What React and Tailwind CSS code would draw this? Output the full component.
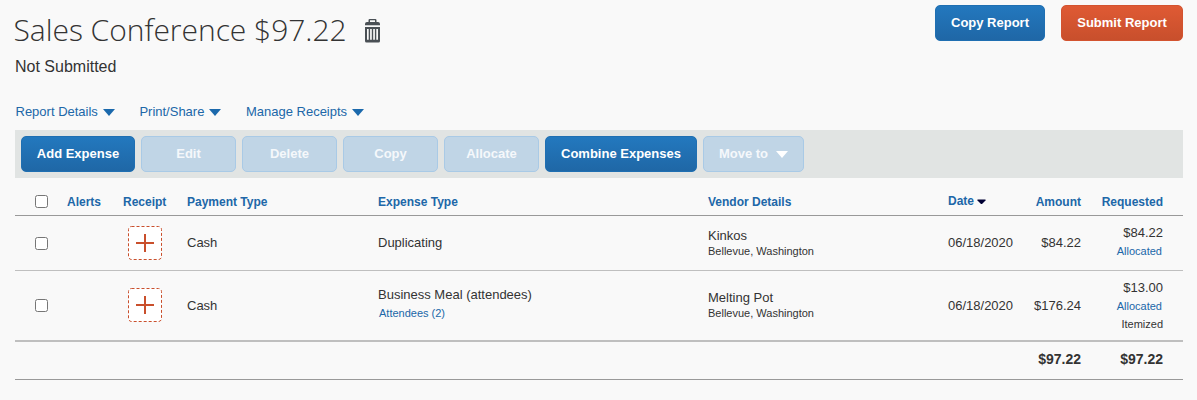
import React from 'react';

const COLS =
  'grid grid-cols-[52px_56px_64px_191px_330px_240px_90px_43px_82px_20px]';

function Caret({ className }) {
  return (
    <svg viewBox="0 0 12 7" className={`h-[7px] w-3 ${className}`} aria-hidden="true">
      <path d="M0 0h12L6 7z" fill="currentColor" />
    </svg>
  );
}

function TrashIcon() {
  return (
    <svg viewBox="0 0 15 24" className="h-6 w-[15px] text-[#4a5055]" aria-hidden="true">
      <path
        fill="currentColor"
        fillRule="evenodd"
        d="M3.500 3V1.200Q3.500 0 4.700 0h5.600q1.200 0 1.200 1.200V3H13q2 0 2 2V6.200H0V5q0-2 2-2zM5 3h5V1.300H5zM0 8h15v14q0 1.500-1.500 1.500h-12Q0 23.500 0 22zM2 10v10.800h1.700V10zM5.100 10v10.800h1.700V10zM8.200 10v10.800h1.700V10zM11.300 10v10.800h1.700V10z"
      />
    </svg>
  );
}

function Button({ children, tone = 'blue', className = '' }) {
  const tones = {
    blue: 'border-[#1f6fb2] bg-linear-to-b from-[#2378be] to-[#1f67a6] text-white',
    red: 'border-[#d3532f] bg-linear-to-b from-[#df5a34] to-[#c84f2c] text-white',
    disabled: 'border-[#a9cae6] bg-[#c0d5e6] text-[#f5f8fb]',
  };
  return (
    <button
      type="button"
      className={`flex h-9 shrink-0 items-center justify-center rounded-[5px] border pb-px text-[13px] font-bold ${tones[tone]} ${className}`}
    >
      {children}
    </button>
  );
}

function MenuLink({ children }) {
  return (
    <a className="flex items-center text-[13px] leading-4 text-[#2067a8]">
      {children}
      <Caret className="mt-px ml-[5px] text-[#1b69ac]" />
    </a>
  );
}

function Checkbox() {
  return (
    <input
      type="checkbox"
      className="ml-5 block size-[13px] appearance-none rounded-[2.5px] border border-[#767676] bg-white"
    />
  );
}

function AddReceipt() {
  return (
    <svg viewBox="0 0 34 34" className="ml-[5px] block size-[34px]" aria-hidden="true">
      <rect x="0.500" y="0.500" width="33" height="33" rx="3" fill="#fff" stroke="#c94f2c" strokeDasharray="3 2" />
      <path d="M8 17h18M17 8v18" stroke="#c94f2c" strokeWidth="2" />
    </svg>
  );
}

function Row({ type, attendees, vendor, amount, requested, itemized, className }) {
  const nudge = itemized ? 'pt-px' : '';
  return (
    <div className={`${COLS} items-center border-[#bfbfbf] ${className}`}>
      <Checkbox />
      <span />
      <AddReceipt />
      <span className={nudge}>Cash</span>
      <div className="leading-[18px]">
        <div>{type}</div>
        {attendees && <div className="pb-[3px] pl-px text-[11px] text-[#2067a8]">{attendees}</div>}
      </div>
      <div>
        <div className="leading-4">{vendor}</div>
        <div className="text-[11px] leading-[15px]">Bellevue, Washington</div>
      </div>
      <span className={`whitespace-nowrap ${nudge}`}>06/18/2020</span>
      <span className={`flex justify-end whitespace-nowrap ${nudge}`}>{amount}</span>
      <div className={`text-right leading-[18px] ${itemized ? '' : 'pb-[3px]'}`}>
        <div className="pt-px">{requested}</div>
        <div className="pr-px text-[11px] text-[#2067a8]">Allocated</div>
        {itemized && <div className="text-[11px]">Itemized</div>}
      </div>
    </div>
  );
}

export default function App() {
  return (
    <main className="h-[400px] w-[1197px] overflow-hidden bg-[#f9f9f9] pr-[14px] pl-[15px] font-['Liberation_Sans',Arial,sans-serif] text-[13px] text-[#333]">
      <header className="flex h-[101px] justify-between">
        <div>
          <div className="flex pt-[9px]">
            <h1 className="-ml-[1.5px] w-[349.5px] font-['Open_Sans',sans-serif] text-[30px] leading-[41px] font-light tracking-[-0.03px] whitespace-nowrap">
              Sales Conference $97.22
            </h1>
            <div className="pt-[10px] pl-[2px]">
              <TrashIcon />
            </div>
          </div>
          <p className="mt-[7px] text-base leading-5">Not Submitted</p>
        </div>
        <div className="flex gap-4 pt-[5px]">
          <Button className="w-[110px]">Copy Report</Button>
          <Button tone="red" className="w-[122px]">Submit Report</Button>
        </div>
      </header>

      <nav className="flex h-[29px] items-start gap-[24.5px] pt-[3px] pl-[0.5px]">
        <MenuLink>Report Details</MenuLink>
        <MenuLink>Print/Share</MenuLink>
        <MenuLink>Manage Receipts</MenuLink>
      </nav>

      <div className="flex h-12 items-center gap-[6px] bg-[#e1e4e3] px-[6px]">
        <Button className="w-[114px]">Add Expense</Button>
        <Button tone="disabled" className="w-[95px]">Edit</Button>
        <Button tone="disabled" className="w-[95px]">Delete</Button>
        <Button tone="disabled" className="w-[95px]">Copy</Button>
        <Button tone="disabled" className="w-[95px]">Allocate</Button>
        <Button className="w-[152px]">Combine Expenses</Button>
        <Button tone="disabled" className="w-[101px]">
          Move to
          <Caret className="mt-[2px] ml-2 text-white" />
        </Button>
      </div>

      <section>
        <div className={`${COLS} h-[38px] items-end border-b border-[#999] pb-[5px] text-xs leading-4 font-bold text-[#2067a8]`}>
          <div className="pb-[2px]">
            <Checkbox />
          </div>
          <span>Alerts</span>
          <span>Receipt</span>
          <span>Payment Type</span>
          <span>Expense Type</span>
          <span>Vendor Details</span>
          <span className="flex items-center pb-px">
            Date
            <svg viewBox="0 0 9 5" className="ml-[3px] h-[5px] w-[9px]" aria-hidden="true">
              <path d="M0.500 0.500h8v1L5 5H4L0.500 1.500z" fill="#000033" />
            </svg>
          </span>
          <span className="flex justify-end">Amount</span>
          <span className="text-right">Requested</span>
        </div>
        <Row
          className="h-[55px] border-b"
          type="Duplicating"
          vendor="Kinkos"
          amount="$84.22"
          requested="$84.22"
        />
        <Row
          className="h-[71px] border-b-2 pb-px"
          type="Business Meal (attendees)"
          attendees="Attendees (2)"
          vendor="Melting Pot"
          amount="$176.24"
          requested="$13.00"
          itemized
        />
        <div className="flex h-[38px] items-center justify-end border-b border-[#999] pr-5 pb-[3px] text-sm font-bold">
          <span>$97.22</span>
          <span className="w-[82px] text-right">$97.22</span>
        </div>
      </section>
    </main>
  );
}
